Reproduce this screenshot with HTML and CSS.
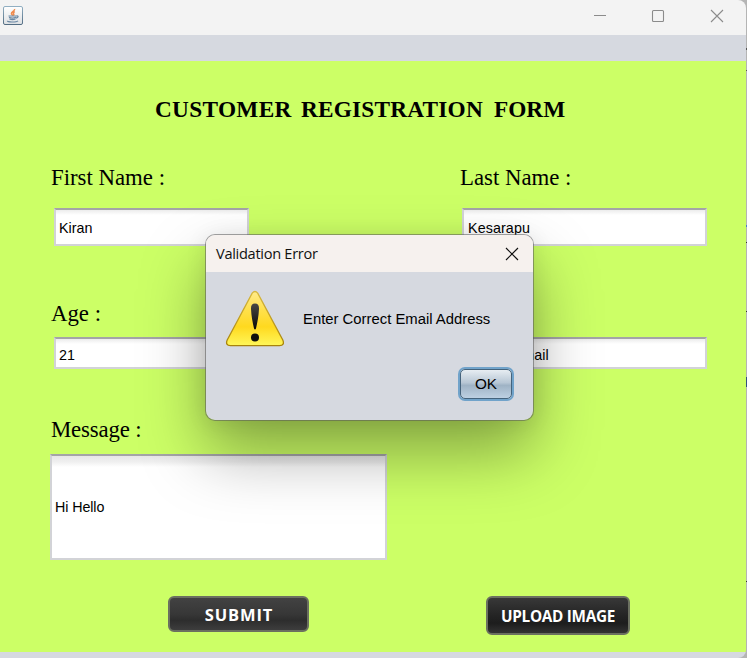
FILE: index.html
```html
<!DOCTYPE html>
<html lang="en">
<head>
<meta charset="utf-8">
<title>Customer Registration Form</title>
<link rel="stylesheet" href="styles.css">
</head>
<body>
<div class="desktop">
  <main class="window">
    <header class="titlebar">
      <svg class="java" width="20" height="20" viewBox="0 0 20 20">
        <defs><linearGradient id="tile" x2="0" y2="1"><stop offset="0" stop-color="#fff"/><stop offset="1" stop-color="#dde0e3"/></linearGradient>
        <linearGradient id="edge" x2="0" y2="1"><stop offset="0" stop-color="#91afc2"/><stop offset="1" stop-color="#536d83"/></linearGradient></defs>
        <rect x=".5" y=".5" width="19" height="18" rx="1.5" fill="url(#tile)" stroke="url(#edge)"/>
        <path d="M11.6 3c.5 2-3.400 2.500-3.200 4.600.1.900 1.200 1.300 1.500 2.200M11.800 5.700c-2 1-1.600 1.700-1 2.500.3.500 0 .9-.4 1.300" fill="none" stroke="#ef8a4d" stroke-width="1.500"/>
        <path d="M5.500 10h8.300M6 11.400c2 .8 5 .8 7 0M6.500 13c2 .8 4 .8 6 0M13.500 10c2.200-.7 2.200 1.700-.5 2.100M4.500 14.700c-.8 1.700 9 1.700 10.500.1" fill="none" stroke="#6a88a4" stroke-width="1.200"/>
      </svg>
      <div class="controls">
        <svg width="14" height="14" viewBox="0 0 14 14"><path d="M1 6.500h12"/></svg>
        <svg width="14" height="14" viewBox="0 0 14 14"><rect x="1.500" y="1.500" width="11" height="11" rx="1"/></svg>
        <svg width="14" height="14" viewBox="0 0 14 14"><path d="M1 1l12 12M13 1L1 13"/></svg>
      </div>
    </header>
    <div class="strip"></div>
    <section class="form">
      <h1><span class="w1">CUSTOMER</span><span class="w2">REGISTRATION</span><span class="w3">FORM</span></h1>
      <div class="row names">
        <div class="group"><label class="first">First Name :</label><div class="input short">Kiran</div></div>
        <div class="group"><label class="last">Last Name :</label><div class="input wide">Kesarapu</div></div>
      </div>
      <div class="row details">
        <div class="group"><label>Age :</label><div class="input low short">21</div></div>
        <div class="group"><label></label><div class="input low wide">kiran@gmail</div></div>
      </div>
      <div class="group message"><label>Message :</label><div class="input area">Hi Hello</div></div>
      <div class="actions"><button class="submit">SUBMIT</button><button class="upload">UPLOAD IMAGE</button></div>
    </section>
    <div class="bottom"></div>
  </main>
  <aside class="behind"></aside>
  <div class="dialog" role="dialog">
    <div class="dialog-head"><span>Validation Error</span>
      <svg width="14" height="14" viewBox="0 0 14 14"><path d="M1 1l12 12M13 1L1 13" stroke="#111" stroke-width="1.150"/></svg>
    </div>
    <div class="dialog-body">
      <svg class="warning" width="60" height="58" viewBox="0 0 60 58">
        <defs><linearGradient id="sun" x2="0" y2="1"><stop offset="0" stop-color="#ffeb8a"/><stop offset=".35" stop-color="#ffe04a"/><stop offset=".65" stop-color="#ffd91f"/><stop offset="1" stop-color="#fff75a"/></linearGradient>
        <linearGradient id="rim" x2="0" y2="1"><stop offset="0" stop-color="#d7b83e"/><stop offset="1" stop-color="#a8830b"/></linearGradient>
        <linearGradient id="ink" x2="0" y2="1"><stop offset="0" stop-color="#474744"/><stop offset="1" stop-color="#080806"/></linearGradient></defs>
        <path d="M27.200 3.200Q30 -.2 32.700 3.200L57.800 50Q60 55.300 54.500 55.700H5.500Q0 55.300 2.200 50Z" fill="url(#sun)" stroke="url(#rim)" stroke-width="1.300"/>
        <path d="M30 13.600c3 0 4.200 2.200 4 5.500-.3 7-1.700 14-3 19.500q-1 2-2 0c-1.300-5.500-2.700-12.500-3-19.500-.2-3.300 1-5.500 4-5.500z" fill="url(#ink)"/>
        <circle cx="30" cy="47.500" r="4" fill="#11110d"/>
      </svg>
      <p>Enter Correct Email Address</p>
    </div>
    <button class="ok">OK</button>
  </div>
</div>
</body>
</html>
```
FILE: styles.css
```css
* { box-sizing: border-box; }
body { margin: 0; background: #d6d9df; overflow: hidden; }
.desktop { position: relative; width: 747px; height: 658px; display: flex; overflow: hidden; background: #b5b5b5; }
.window { width: 746px; height: 658px; border-radius: 0 8px 8px 0; overflow: hidden; }
.titlebar { height: 35px; background: #f3f3f3; display: flex; justify-content: space-between; padding: 6px 22px 0 3px; }
.controls { display: flex; gap: 44px; padding-top: 3px; }
.controls svg { fill: none; stroke: #8b8b8b; stroke-width: 1.1; }
.controls svg:nth-child(-n+2) { margin-left: -1px; margin-right: 1px; }
.strip { height: 26px; background: #d6d9e0; }
.form { height: 591px; background: #ccff66; padding: 34px 0 0 50px; }
.bottom { height: 6px; background: #d6d9e0; }
.behind { width: 1px; background: linear-gradient(#0000 48px, #555 48px 50px, #0000 50px 70px, #555 70px 71px, #0000 71px 225px, #4c7bd0 225px 227px, #0000 227px 242px, #333 242px 243px, #0000 243px 311px, #333 311px 312px, #0000 312px 377px, #344f80 377px 387px, #0000 387px 581px, #333 581px 582px, #0000 582px), #b4b4b4; }
h1 { margin: 0 0 0 105px; height: 28px; display: flex; gap: 10px; font: bold 23.3px/28px "Liberation Serif", serif; color: #000; white-space: nowrap; }
.w1 { width: 136px; letter-spacing: .3px; }
.w2 { width: 183px; letter-spacing: .2px; }
.row { display: flex; }
.row .group:first-child { width: 409px; }
.names { margin-top: 41px; height: 81px; }
.details { margin-top: 55px; height: 68px; }
.message { margin-top: 48px; height: 142px; }
label { display: block; height: 28px; padding-left: 1px; font: 22.8px/28px "Liberation Serif", serif; color: #000; white-space: nowrap; }
.message label { letter-spacing: -.15px; }
.input { height: 38px; margin: 16px 0 0 3px; padding: 2px 0 0 4px; display: flex; align-items: center; background: linear-gradient(#ececec, #fff 5px); border: 2px solid #d2d3d7; border-top-color: #a4a4a7; font: 14.3px "Liberation Sans", sans-serif; color: #000; }
.short { width: 195px; margin-left: 4px; padding-left: 3px; }
.wide { width: 245px; }
.wide { letter-spacing: .1px; }
.low { height: 32px; margin-top: 9px; padding-top: 4px; }
.area { width: 337px; height: 106px; margin: 10px 0 0; padding: 0 0 0 3px; letter-spacing: -.1px; background: linear-gradient(#e7e7e7, #f0f0f0 6px, #fff 11px); }
.actions { display: flex; align-items: flex-start; gap: 177px; padding: 38px 0 0 118px; }
button { margin: 0; padding: 0; display: flex; align-items: center; justify-content: center; white-space: nowrap; }
.submit, .upload { color: #fff; font: bold 16.5px "Open Sans", sans-serif; border: 2px solid #6b7060; border-radius: 6px; }
.submit { width: 141px; height: 36px; padding: 0 0 0 1px; letter-spacing: .9px; background: linear-gradient(#424242, #373737 50%, #2d2d2d 70%, #3d3d3d); }
.upload { width: 144px; height: 39px; font-size: 15.3px; letter-spacing: -.3px; background: linear-gradient(#383838, #242424 50%, #1d1d1d 72%, #333); }
.dialog { position: absolute; left: 205px; top: 234px; width: 329px; height: 187px; border: 1px solid rgba(90,90,90,.55); border-radius: 10px; background: #d6d9e0; background-clip: padding-box; box-shadow: 0 32px 64px rgba(0,0,0,.35), 0 2px 21px rgba(0,0,0,.08); overflow: hidden; }
.dialog-head { height: 37px; background: #f6f1ee; display: flex; justify-content: space-between; align-items: center; padding: 0 14px 0 10px; font: 14.6px "Open Sans", sans-serif; letter-spacing: -.3px; color: #111; }
.dialog-head span { padding-bottom: 2px; }
.dialog-body { height: 95px; padding: 18px 0 0 19px; display: flex; gap: 18px; }
p { margin: 20px 0 0; height: 18px; font: 14.85px/18px "Liberation Sans", sans-serif; color: #000; white-space: nowrap; }
.ok { width: 52px; height: 30px; margin: 2px 0 0 254px; border: 1px solid #44637c; border-radius: 5px; box-shadow: 0 0 0 2px #71a3ca; background: linear-gradient(#e7edf2, #b8c7d5 45%, #9fb3c5 55%, #bdd0e2); font: 15.3px "Liberation Sans", sans-serif; color: #000; }
```
